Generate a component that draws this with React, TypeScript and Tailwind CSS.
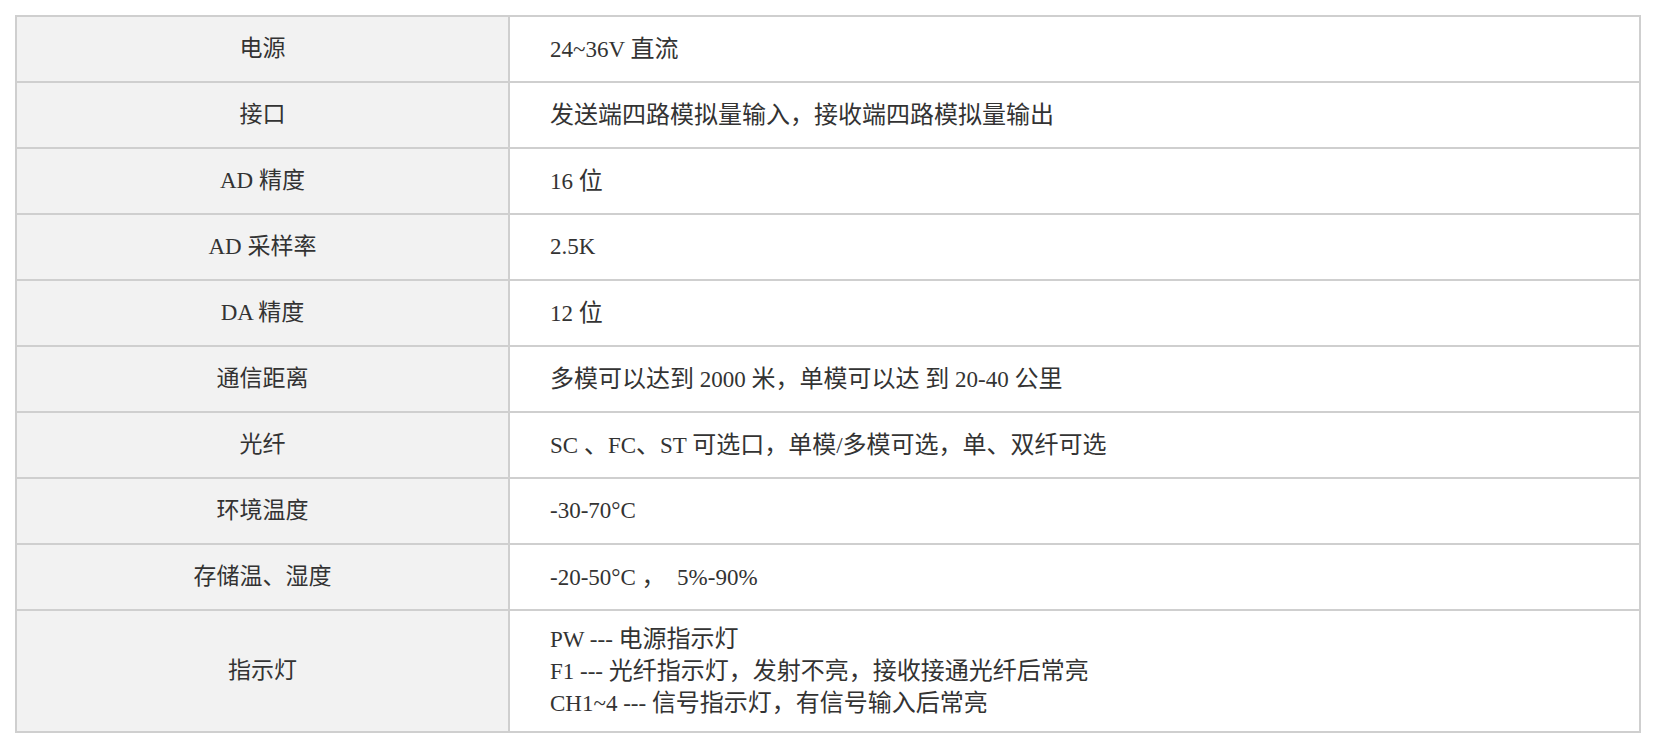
const rows: [string, string[]][] = [
  ["电源", ["24~36V 直流"]],
  ["接口", ["发送端四路模拟量输入，接收端四路模拟量输出"]],
  ["AD 精度", ["16 位"]],
  ["AD 采样率", ["2.5K"]],
  ["DA 精度", ["12 位"]],
  ["通信距离", ["多模可以达到 2000 米，单模可以达 到 20-40 公里"]],
  ["光纤", ["SC 、FC、ST 可选口，单模/多模可选，单、双纤可选"]],
  ["环境温度", ["-30-70°C"]],
  ["存储温、湿度", ["-20-50°C ，  5%-90%"]],
  [
    "指示灯",
    [
      "PW --- 电源指示灯",
      "F1 --- 光纤指示灯，发射不亮，接收接通光纤后常亮",
      "CH1~4 --- 信号指示灯，有信号输入后常亮",
    ],
  ],
];

// CJK runs render a touch wider than the Latin text in the value column
function Mixed({ text }: { text: string }) {
  const parts = text.split(/([\u3000-\u303f\u4e00-\u9fff\uff00-\uffef]+)/);
  return (
    <>
      {parts.map((p, i) =>
        i % 2 === 1 ? (
          <span key={i} className="text-[24px]">
            {p}
          </span>
        ) : (
          <span key={i}>{p}</span>
        )
      )}
    </>
  );
}

export default function App() {
  return (
    <div className="min-h-screen bg-white pt-[15px] pl-[15px]">
      <table
        className="w-[1626px] border-collapse border-2 border-[#cfcfcf] text-[23px] leading-[32px] text-[#333]"
        style={{ fontFamily: '"Liberation Serif", "Noto Sans CJK SC", serif' }}
      >
        <tbody>
          {rows.map(([label, lines]) => (
            <tr key={label} className="h-[66px]">
              <td className="w-[493px] border-2 border-[#cfcfcf] bg-[#f2f2f2] text-center align-middle">
                {label}
              </td>
              <td className="whitespace-pre border-2 border-[#cfcfcf] py-3 pl-[40px] align-middle">
                {lines.map((l) => (
                  <div key={l} className="h-[32px]">
                    <Mixed text={l} />
                  </div>
                ))}
              </td>
            </tr>
          ))}
        </tbody>
      </table>
    </div>
  );
}
